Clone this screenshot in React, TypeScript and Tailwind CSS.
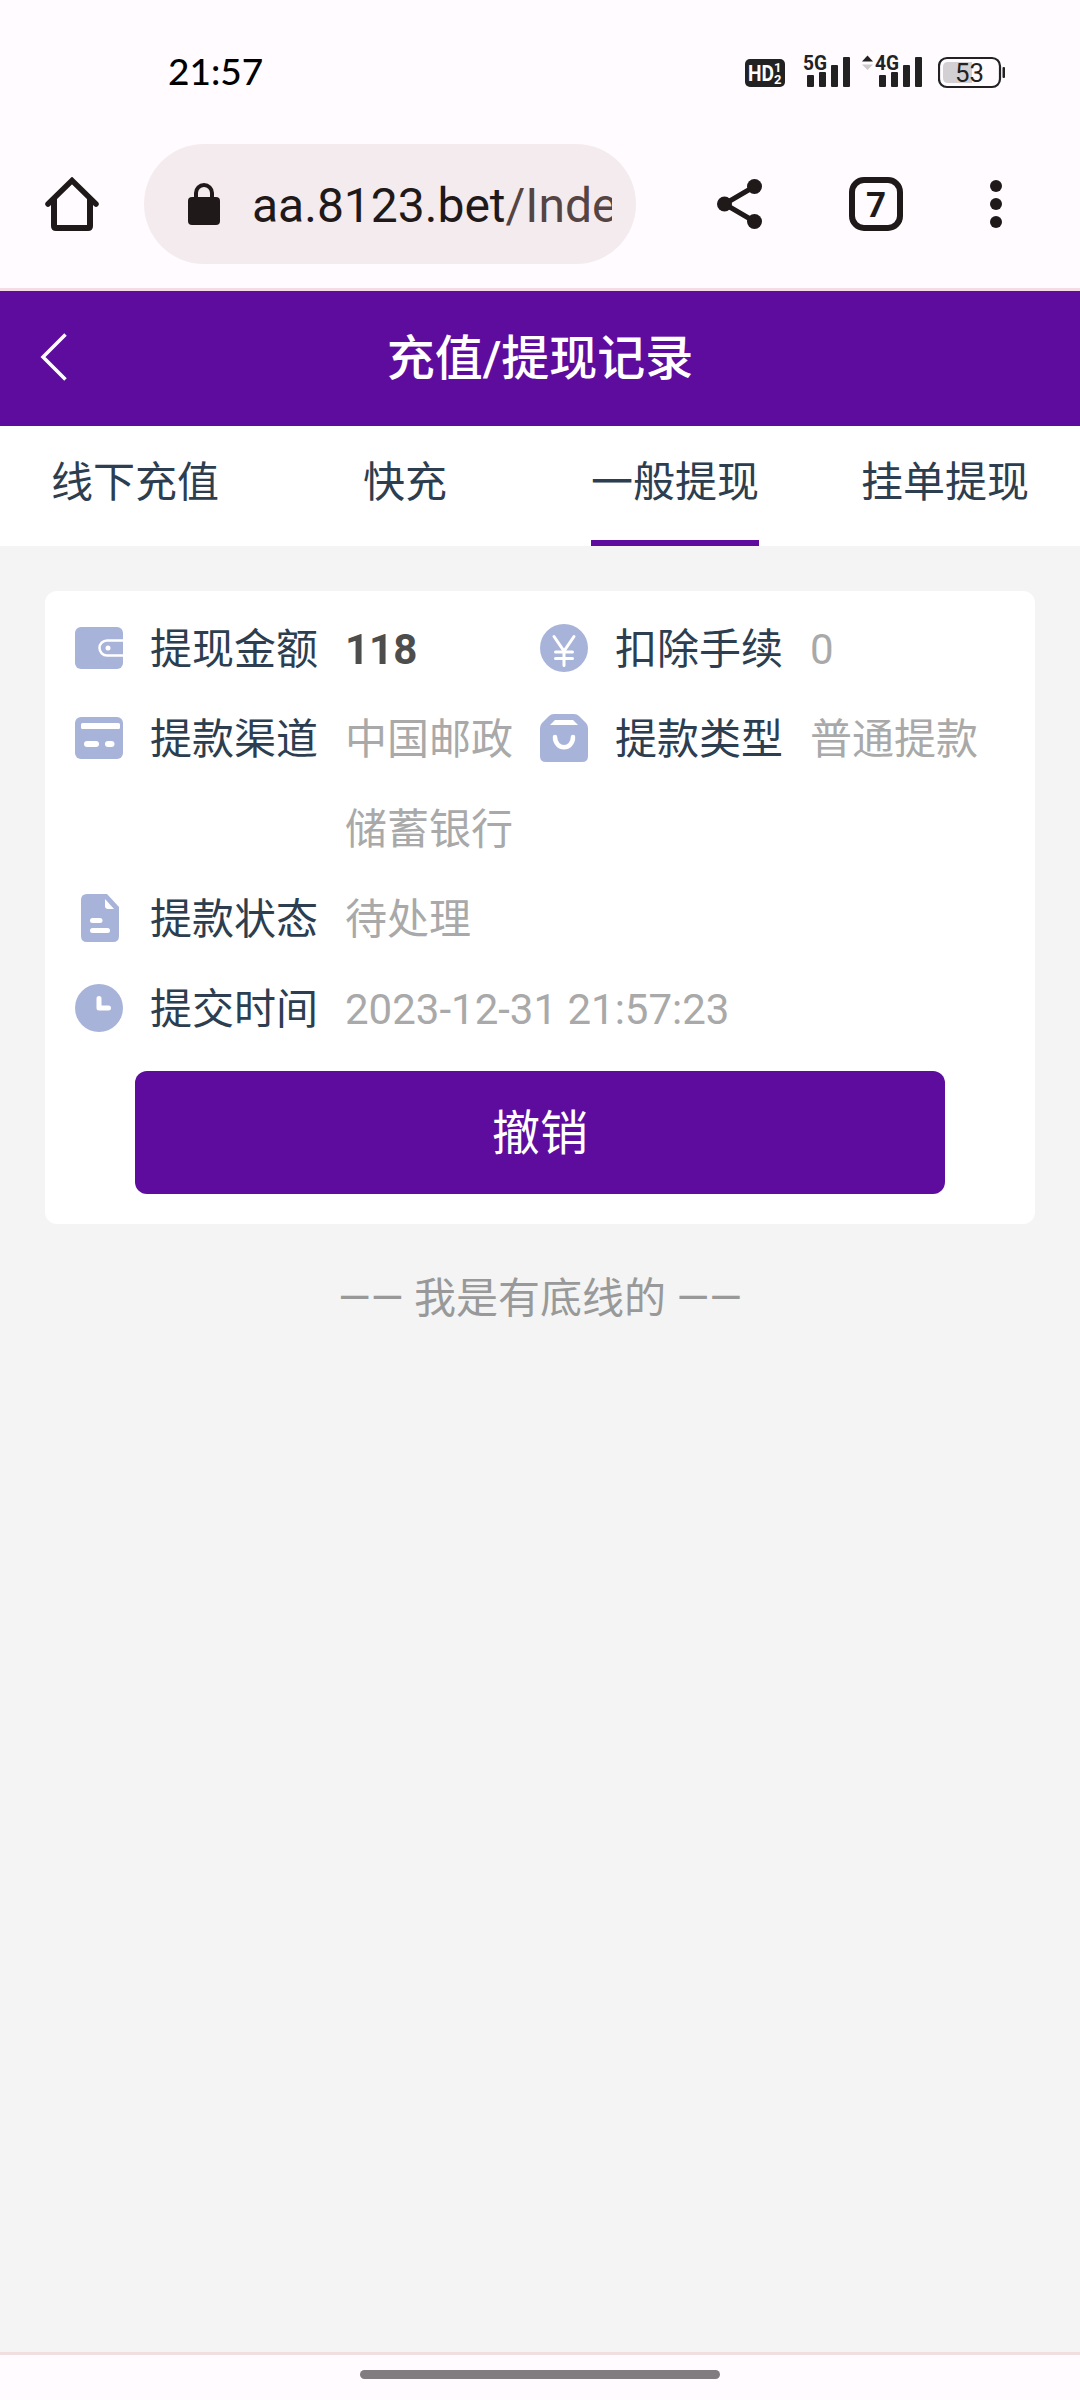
import type { ReactNode } from "react";

interface RecordItemProps {
  icon: ReactNode;
  label: string;
  children: ReactNode;
  valueClass?: string;
}

const tabs = ["线下充值", "快充", "一般提现", "挂单提现"];
const activeTab = "一般提现";

function SignalBars() {
  return (
    <g fill="#222">
      <rect x="3" y="19" width="7" height="12" rx="1" />
      <rect x="15" y="16" width="7" height="15" rx="1" />
      <rect x="27" y="9" width="7" height="22" rx="1" />
      <rect x="39" y="1" width="7" height="30" rx="1" />
    </g>
  );
}

function StatusBar() {
  return (
    <div className="flex h-[120px] items-start justify-between pt-[46px] pl-[168px] pr-[74px]">
      <div className="pt-2 font-[Lato] text-[37px] leading-[34px] font-medium text-black">
        21:57
      </div>
      <div className="flex font-[Roboto] text-[#222]">
        <svg width="41" height="43" viewBox="0 -10 41 43">
          <rect x="0" y="3" width="40" height="28" rx="5" fill="#222" />
          <g fill="#fff" fontWeight="700">
            <text x="3" y="25" fontSize="22" textLength="26" lengthAdjust="spacingAndGlyphs">
              HD
            </text>
            <text x="29" y="16" fontSize="13">1</text>
            <text x="29" y="28" fontSize="13">2</text>
          </g>
        </svg>
        <svg className="ml-4" width="49" height="43" viewBox="-2 -10 49 43">
          <text x="-1" y="14" fontSize="21" fontWeight="700" fill="#222" textLength="24" lengthAdjust="spacingAndGlyphs">
            5G
          </text>
          <SignalBars />
        </svg>
        <svg className="ml-[11px]" width="62" height="43" viewBox="-14 -10 62 43">
          <path d="M-14 5.500 L-8.500 -0.500 L-3 5.500Z" fill="#222" />
          <path d="M-14 8.500 L-8.500 14 L-3 8.500Z" fill="#ccc" />
          <text x="-1" y="14" fontSize="21" fontWeight="700" fill="#222" textLength="24" lengthAdjust="spacingAndGlyphs">
            4G
          </text>
          <SignalBars />
        </svg>
        <svg className="ml-[14px]" width="68" height="43" viewBox="0 -10 68 43">
          <rect x="1" y="2" width="61" height="29" rx="8" fill="none" stroke="#222" strokeWidth="2.200" />
          <path d="M10 6 H34 V27 H10 Q5 27 5 22 V11 Q5 6 10 6Z" fill="#d3d0d4" />
          <rect x="64.500" y="11" width="2.500" height="11" rx="1" fill="#222" />
          <text x="31.500" y="25.500" fontSize="25" textAnchor="middle" fill="#222" textLength="29" lengthAdjust="spacingAndGlyphs">
            53
          </text>
        </svg>
      </div>
    </div>
  );
}

function BrowserBar() {
  return (
    <div className="flex h-[168px] items-center pl-[45px] font-[Roboto] text-[#1f1a19]">
      <svg width="54" height="54" viewBox="0 0 54 54" fill="none" stroke="currentColor" strokeWidth="6">
        <path d="M3 27 L27 3.500 L51 27" strokeLinecap="round" strokeWidth="5.500" />
        <path d="M9 22 V49 Q9 51 11 51 H43 Q45 51 45 49 V22" />
      </svg>
      <div className="ml-[45px] flex h-[120px] w-[492px] items-center rounded-full bg-[#f4ebee] pr-6 pl-11">
        <svg className="shrink-0" width="32" height="42" viewBox="0 0 32 42">
          <rect x="0" y="14" width="32" height="28" rx="4" fill="currentColor" />
          <path d="M8 15 V10 A8 8 0 0 1 24 10 V15" fill="none" stroke="currentColor" strokeWidth="4" />
        </svg>
        <div className="ml-8 overflow-hidden pt-[3px] text-[48px] leading-[60px] whitespace-nowrap">
          aa.8123.bet<span className="text-[#544544]">/Inde</span>
        </div>
      </div>
      <svg className="ml-[81px]" width="45" height="50" viewBox="0 0 45 50" fill="currentColor">
        <path d="M37.500 7.500 L7.500 25 L37.500 42.500" fill="none" stroke="currentColor" strokeWidth="5" />
        <circle cx="37.500" cy="7.500" r="7.500" />
        <circle cx="7.500" cy="25" r="7.500" />
        <circle cx="37.500" cy="42.500" r="7.500" />
      </svg>
      <div className="ml-[87px] flex h-[54px] w-[54px] items-center justify-center rounded-[15px] border-6 border-[#1f1a19] pt-0.5 text-[35px] leading-none font-bold">
        7
      </div>
      <svg className="ml-[87px]" width="12" height="48" viewBox="0 0 12 48" fill="currentColor">
        <circle cx="6" cy="6" r="6" />
        <circle cx="6" cy="24" r="6" />
        <circle cx="6" cy="42" r="6" />
      </svg>
    </div>
  );
}

function WalletIcon() {
  return (
    <svg width="48" height="48" viewBox="0 0 48 48">
      <rect y="3" width="48" height="42" rx="6" fill="#a8b3d9" />
      <path d="M48 16.500 H32 A7.500 7.500 0 0 0 32 31.500 H48" fill="none" stroke="#fff" strokeWidth="2.500" />
      <circle cx="33" cy="24" r="2.500" fill="#fff" />
    </svg>
  );
}

function CardIcon() {
  return (
    <svg width="48" height="48" viewBox="0 0 48 48">
      <rect y="3" width="48" height="42" rx="6" fill="#a8b3d9" />
      <g fill="#fff">
        <rect x="6" y="9" width="39" height="6" rx="1.500" />
        <rect x="9" y="27" width="15" height="6" rx="3" />
        <rect x="30" y="27" width="9.500" height="6" rx="3" />
      </g>
    </svg>
  );
}

function YenIcon() {
  return (
    <svg width="48" height="48" viewBox="0 0 48 48">
      <circle cx="24" cy="24" r="24" fill="#a8b3d9" />
      <path
        d="M14 12.500 L24 27 L34 12.500 M24 27 V41.500 M15.500 28 H32.500 M15.500 34.500 H32.500"
        fill="none"
        stroke="#fff"
        strokeWidth="3"
        strokeLinecap="round"
      />
    </svg>
  );
}

function BagIcon() {
  return (
    <svg width="48" height="48" viewBox="0 0 48 48">
      <path
        d="M14 0 H34 Q37 0 39 2 L46 9 Q48 11 48 14 V42 Q48 48 42 48 H6 Q0 48 0 42 V14 Q0 11 2 9 L9 2 Q11 0 14 0Z"
        fill="#a8b3d9"
      />
      <path d="M15 6 H33 L38 11 H10Z" fill="#fff" />
      <path d="M15 23 C15 36.500 33 36.500 33 23" fill="none" stroke="#fff" strokeWidth="4.500" strokeLinecap="round" />
    </svg>
  );
}

function FileIcon() {
  return (
    <svg width="48" height="48" viewBox="0 0 48 48">
      <path d="M12 0 H32 L44 13 V42 Q44 48 38 48 H12 Q6 48 6 42 V6 Q6 0 12 0Z" fill="#a8b3d9" />
      <path d="M30 5 V12 Q30 15 33 15 H39Z" fill="#fff" />
      <rect x="15" y="24" width="12.500" height="5" rx="2.500" fill="#fff" />
      <rect x="15" y="34" width="20" height="5" rx="2.500" fill="#fff" />
    </svg>
  );
}

function ClockIcon() {
  return (
    <svg width="48" height="48" viewBox="0 0 48 48">
      <circle cx="24" cy="24" r="24" fill="#a8b3d9" />
      <path d="M24 14.500 V24 H33.500" fill="none" stroke="#fff" strokeWidth="5" strokeLinecap="round" strokeLinejoin="round" />
    </svg>
  );
}

function RecordItem({ icon, label, children, valueClass = "text-[#a9a9a9]" }: RecordItemProps) {
  return (
    <div className="flex items-start">
      <div className="flex h-[86px] w-12 shrink-0 items-center">{icon}</div>
      <div className="ml-[27px] w-[168px] shrink-0 whitespace-nowrap text-[#2c3e50]">{label}</div>
      <div className={`ml-[27px] ${valueClass}`}>{children}</div>
    </div>
  );
}

export default function App() {
  return (
    <div className="flex h-[2400px] w-[1080px] flex-col overflow-hidden bg-[#fffbff] font-[Roboto,'Noto_Sans_CJK_SC',sans-serif]">
      <StatusBar />
      <BrowserBar />

      <div className="flex grow flex-col border-y-3 border-t-[#f5dbe6] border-b-[#f1dfdf] bg-[#f4f4f4]">
        <header className="grid h-[135px] grid-cols-[120px_1fr_120px] items-center bg-[#5e0c9e] text-white">
          <svg className="mb-1 ml-10" width="28" height="48" viewBox="0 0 28 48" fill="none" stroke="currentColor" strokeWidth="3.500">
            <path d="M25.500 1.500 L3 24 L25.500 46.500" />
          </svg>
          <h1 className="text-center text-[48px] leading-[60px] font-medium">充值/提现记录</h1>
        </header>

        <nav className="grid h-[120px] grid-cols-4 bg-white text-[42px] text-[#2c3e50]">
          {tabs.map((tab) => (
            <div key={tab} className="flex flex-col items-center">
              <div className="h-[114px] leading-[114px]">{tab}</div>
              {tab === activeTab && <div className="h-1.5 w-[168px] bg-[#5e0c9e]" />}
            </div>
          ))}
        </nav>

        <main className="px-[45px] pt-[45px]">
          <section className="rounded-xl bg-white px-[30px] pt-3.5 pb-[30px] text-[42px] leading-[90px]">
            <div className="grid grid-cols-[465px_465px]">
              <RecordItem icon={<WalletIcon />} label="提现金额" valueClass="font-bold text-[#4d4d4d]">
                118
              </RecordItem>
              <RecordItem icon={<YenIcon />} label="扣除手续">
                0
              </RecordItem>
              <RecordItem icon={<CardIcon />} label="提款渠道">
                中国邮政储蓄银行
              </RecordItem>
              <RecordItem icon={<BagIcon />} label="提款类型">
                普通提款
              </RecordItem>
            </div>
            <RecordItem icon={<FileIcon />} label="提款状态">
              待处理
            </RecordItem>
            <RecordItem icon={<ClockIcon />} label="提交时间">
              2023-12-31 21:57:23
            </RecordItem>
            <button className="mx-auto mt-4 block h-[123px] w-[810px] rounded-xl bg-[#5e0c9e] pt-[3px] text-[48px] leading-[120px] text-white">
              撤销
            </button>
          </section>
          <p className="mt-[30px] text-center text-[42px] leading-[90px] text-[#999]">—— 我是有底线的 ——</p>
        </main>
      </div>

      <div className="flex h-[45px] justify-center pt-[15px]">
        <div className="h-[9px] w-[360px] rounded-full bg-[#807c80]" />
      </div>
    </div>
  );
}
